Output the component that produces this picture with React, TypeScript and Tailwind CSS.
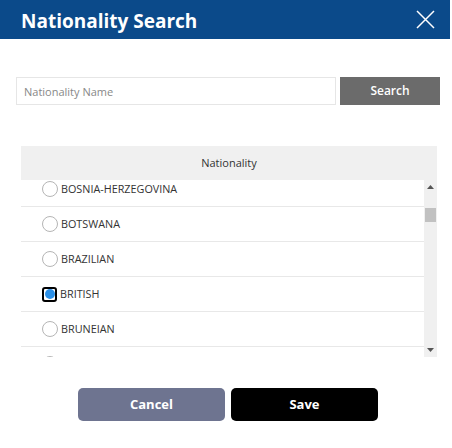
import React, { useState } from "react";

const nationalities = [
  "BOSNIA-HERZEGOVINA",
  "BOTSWANA",
  "BRAZILIAN",
  "BRITISH",
  "BRUNEIAN",
  "BULGARIAN",
];

export default function App() {
  const [selected, setSelected] = useState("BRITISH");
  const [query, setQuery] = useState("");

  return (
    <div
      className="w-[452px] h-[448px] bg-white"
      style={{ fontFamily: '"Open Sans", "Noto Sans", sans-serif' }}
    >
      {/* header */}
      <div className="h-[39px] w-[450px] bg-[#0b4a8a] flex items-center justify-between pl-[21px] pr-[15px]">
        <h1 className="text-[19px] font-bold text-white leading-none pt-[3px]">Nationality Search</h1>
        <button className="w-[19px] h-[19px] flex items-center justify-center">
          <svg width="19" height="19" viewBox="0 0 19 19" fill="none">
            <path d="M1 1 L18 18 M18 1 L1 18" stroke="white" strokeWidth="1.5" />
          </svg>
        </button>
      </div>

      {/* search */}
      <div className="mt-[38px] ml-[16px] flex gap-[4px]">
        <input
          className="w-[320px] h-[28px] border border-[#e6e6e6] px-[7px] text-[11px] text-[#333] placeholder:text-[#888] outline-none"
          placeholder="Nationality Name"
          value={query}
          onChange={(e) => setQuery(e.target.value)}
        />
        <button className="w-[100px] h-[28px] bg-[#6b6b6b] text-white text-[12px] font-semibold">
          Search
        </button>
      </div>

      {/* table */}
      <div className="mt-[41px] ml-[21px] w-[416px]">
        <div className="h-[34px] bg-[#f0f0f0] flex items-center justify-center text-[11px] text-[#333]">
          Nationality
        </div>
        <div className="h-[177px] flex">
          <div className="w-[403px] overflow-hidden">
            <div className="-mt-[8px]">
              {nationalities.map((n) => (
                <div
                  key={n}
                  className="h-[35px] border-b border-[#e8e8e8] flex items-center pl-[21px] gap-[3px] cursor-pointer"
                  onClick={() => setSelected(n)}
                >
                  {selected === n ? (
                    <span className="w-[15px] h-[15px] border-2 border-black rounded-[3px] flex items-center justify-center">
                      <span className="w-[10px] h-[10px] rounded-full bg-[#2b90e8]" />
                    </span>
                  ) : (
                    <span className="w-[16px] h-[16px] rounded-full border border-[#b5b5b5] bg-white" />
                  )}
                  <span className="text-[10.8px] text-[#333]">{n}</span>
                </div>
              ))}
            </div>
          </div>
          {/* scrollbar */}
          <div className="w-[13px] bg-[#f0f0f0] flex flex-col items-center">
            <div className="h-[14px] flex items-center justify-center">
              <svg width="7" height="4" viewBox="0 0 7 4">
                <path d="M0 4 L3.5 0 L7 4 Z" fill="#555" />
              </svg>
            </div>
            <div className="mt-[14px] w-[11px] h-[14px] bg-[#c1c1c1]" />
            <div className="flex-1" />
            <div className="h-[14px] flex items-center justify-center">
              <svg width="7" height="4" viewBox="0 0 7 4">
                <path d="M0 0 L7 0 L3.5 4 Z" fill="#555" />
              </svg>
            </div>
          </div>
        </div>
      </div>

      {/* actions */}
      <div className="mt-[31px] ml-[78px] flex gap-[6px]">
        <button className="w-[147px] h-[33px] rounded-[5px] bg-[#6e7490] text-white text-[13px] font-bold">
          Cancel
        </button>
        <button className="w-[147px] h-[33px] rounded-[5px] bg-black text-white text-[13px] font-bold">
          Save
        </button>
      </div>
    </div>
  );
}
